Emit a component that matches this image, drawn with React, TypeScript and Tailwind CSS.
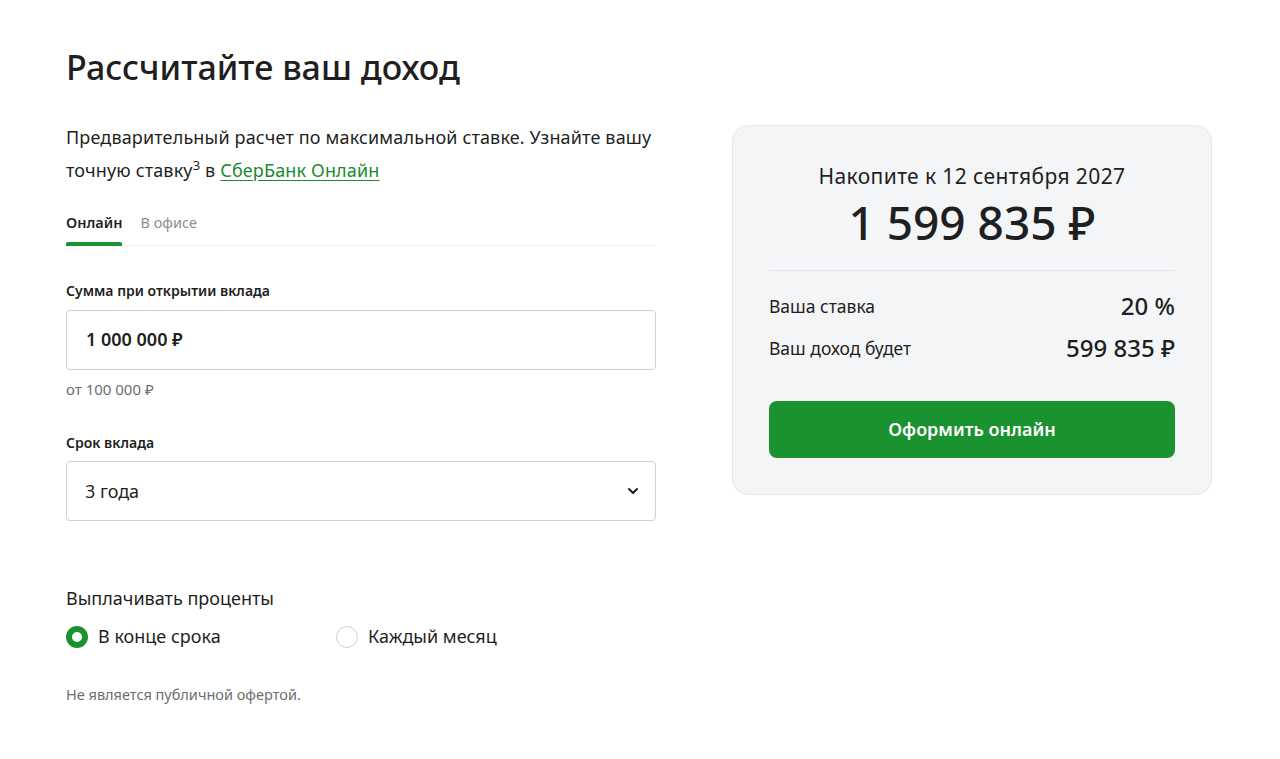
import { ChevronDown } from "lucide-react";

const font = { fontFamily: '"Noto Sans", "Open Sans", sans-serif' };

function Radio({ checked, label }: { checked: boolean; label: string }) {
  return (
    <label className="flex items-center gap-[10px] cursor-pointer">
      {checked ? (
        <span className="box-border h-[22px] w-[22px] rounded-full border-[6px] border-[#1a922f] bg-white" />
      ) : (
        <span className="box-border h-[22px] w-[22px] rounded-full border border-[#cfd1d4] bg-white" />
      )}
      <span className="text-[18px] text-[#1f1f22]">{label}</span>
    </label>
  );
}

export default function App() {
  return (
    <div className="min-h-screen bg-white text-[#1f1f22]" style={font}>
      <div className="px-[66px] pt-[45px]">
        <h1 className="text-[34px] leading-[44px] font-medium text-[#1f1f22]">Рассчитайте ваш доход</h1>

        <div className="mt-[32px] flex items-start gap-[76px]">
          {/* Left column */}
          <div className="w-[590px]">
            <p className="text-[18px] leading-[33px] tracking-[0.15px] text-[#1f1f22]">
              Предварительный расчет по максимальной ставке. Узнайте вашу точную ставку
              <span className="relative top-[-7px] text-[13px] leading-none">3</span> в{" "}
              <a href="#" className="text-[#1a8a2c] underline underline-offset-[3px]">
                СберБанк Онлайн
              </a>
            </p>

            <div className="mt-[25px] flex gap-[18px] border-b border-[#f0f1f3]">
              <div className="relative pb-[11px] text-[14.5px] font-semibold text-[#1f1f22]">
                Онлайн
                <span className="absolute bottom-[-1px] left-0 h-[4px] w-full rounded-t-[2px] bg-[#1a922f]" />
              </div>
              <div className="pb-[11px] text-[14.5px] text-[#8b8e93]">В офисе</div>
            </div>

            <div className="mt-[34px] text-[14px] font-semibold text-[#1f1f22]">Сумма при открытии вклада</div>
            <div className="mt-[9px] flex h-[60px] items-center rounded-[4px] border border-[#cfd1d4] px-[19px] text-[18px] font-semibold">
              1 000 000 ₽
            </div>
            <div className="mt-[8px] text-[15px] text-[#6b6e73]">от 100 000 ₽</div>

            <div className="mt-[32px] text-[14px] font-semibold text-[#1f1f22]">Срок вклада</div>
            <div className="mt-[8px] flex h-[60px] items-center justify-between rounded-[4px] border border-[#cfd1d4] pl-[18px] pr-[14px] text-[18px]">
              <span>3 года</span>
              <ChevronDown size={16} strokeWidth={3} className="text-[#1f1f22]" />
            </div>

            <div className="mt-[64px] text-[18px] text-[#1f1f22]">Выплачивать проценты</div>
            <div className="mt-[11px] flex">
              <div className="w-[270px]">
                <Radio checked label="В конце срока" />
              </div>
              <Radio checked={false} label="Каждый месяц" />
            </div>

            <div className="mt-[34px] text-[14.5px] text-[#6b6e73]">Не является публичной офертой.</div>
          </div>

          {/* Right card */}
          <div className="mt-[4px] w-[480px] rounded-[16px] border border-[#e6e8eb] bg-[#f4f5f7] px-[36px] pb-[36px] pt-[36px]">
            <div className="text-center text-[21px] leading-[28px] tracking-[0.4px] text-[#1f1f22]">
              Накопите к 12 сентября 2027
            </div>
            <div className="mt-[4px] text-center text-[46px] leading-[56px] font-medium text-[#1f1f22]">1 599 835 ₽</div>
            <div className="mt-[20px] h-px bg-[#e3e5e8]" />
            <div className="mt-[17px] flex items-center justify-between">
              <span className="text-[17.5px]">Ваша ставка</span>
              <span className="text-[24px] font-medium">20 %</span>
            </div>
            <div className="mt-[6px] flex items-center justify-between">
              <span className="text-[17.5px]">Ваш доход будет</span>
              <span className="text-[24px] font-medium">599 835 ₽</span>
            </div>
            <button className="mt-[35px] flex h-[57px] w-full items-center justify-center rounded-[8px] bg-[#1a922f] text-[18px] font-semibold text-white">
              Оформить онлайн
            </button>
          </div>
        </div>
      </div>
    </div>
  );
}
